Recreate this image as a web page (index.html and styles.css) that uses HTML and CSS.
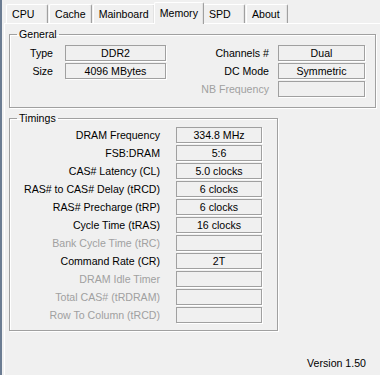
FILE: index.html
```html
<!DOCTYPE html>
<html lang="en">
<head>
    <meta charset="UTF-8">
    <title>CPU-Z Memory</title>
    <link rel="stylesheet" href="styles.css">
</head>
<body>
    <div class="window">
        <div class="tabs">
            <div class="tab">CPU</div>
            <div class="tab">Cache</div>
            <div class="tab">Mainboard</div>
            <div class="tab active">Memory</div>
            <div class="tab">SPD</div>
            <div class="tab">About</div>
        </div>

        <div class="panel">
            <fieldset class="group general">
                <legend>General</legend>
                <div class="grid-general">
                    <span class="lbl lbl-left">Type</span>
                    <span class="val">DDR2</span>
                    <span class="lbl lbl-right">Channels #</span>
                    <span class="val">Dual</span>

                    <span class="lbl lbl-left">Size</span>
                    <span class="val">4096 MBytes</span>
                    <span class="lbl lbl-right">DC Mode</span>
                    <span class="val">Symmetric</span>

                    <span></span>
                    <span></span>
                    <span class="lbl lbl-right off">NB Frequency</span>
                    <span class="val"></span>
                </div>
            </fieldset>

            <fieldset class="group timings">
                <legend>Timings</legend>
                <div class="grid-timings">
                    <span class="lbl">DRAM Frequency</span><span class="val">334.8 MHz</span>
                    <span class="lbl">FSB:DRAM</span><span class="val">5:6</span>
                    <span class="lbl">CAS# Latency (CL)</span><span class="val">5.0 clocks</span>
                    <span class="lbl">RAS# to CAS# Delay (tRCD)</span><span class="val">6 clocks</span>
                    <span class="lbl">RAS# Precharge (tRP)</span><span class="val">6 clocks</span>
                    <span class="lbl">Cycle Time (tRAS)</span><span class="val">16 clocks</span>
                    <span class="lbl off">Bank Cycle Time (tRC)</span><span class="val"></span>
                    <span class="lbl">Command Rate (CR)</span><span class="val">2T</span>
                    <span class="lbl off">DRAM Idle Timer</span><span class="val"></span>
                    <span class="lbl off">Total CAS# (tRDRAM)</span><span class="val"></span>
                    <span class="lbl off">Row To Column (tRCD)</span><span class="val"></span>
                </div>
            </fieldset>

            <div class="version">Version 1.50</div>
        </div>
    </div>
</body>
</html>
```

FILE: styles.css
```css
body{
    margin: 0;
    background-color: #f0f0f0;
    font-family: 'Liberation Sans', Arial, sans-serif;
    font-size: 10.6px;
    color: #000;
    border-left: 2px solid #6b7c92;
    height: 375px;
    box-sizing: border-box;
    overflow: hidden;
}
.window{
    padding-left: 2px;
}
.tabs{
    display: flex;
    align-items: flex-end;
    gap: 1px;
    height: 23px;
    padding-left: 2px;
}
.tab{
    min-width: 30px;
    height: 18px;
    line-height: 18px;
    padding: 0 5px;
    border-top: 1px solid #fff;
    border-left: 1px solid #fff;
    border-right: 1px solid #a0a0a0;
    border-radius: 2px 2px 0 0;
    box-shadow: inset -1px 0 0 #e3e3e3;
}
.tab.active{
    height: 21px;
    line-height: 20px;
    margin: 0 -2px -1px;
    padding: 0 5px;
    position: relative;
    background-color: #f0f0f0;
}
.panel{
    border-top: 1px solid #fff;
    border-left: 1px solid #fff;
    padding: 4px 0 0 4px;
    height: 352px;
}
.group{
    margin: 0;
    padding: 0;
    border: 1px solid #a0a0a0;
    box-shadow: 1px 1px 0 #fff, inset 1px 1px 0 #fff;
}
.group legend{
    margin-left: 7px;
    padding: 0 2px;
    line-height: 13px;
}
.general{
    width: 365px;
    padding: 4px 0 10px;
}
.timings{
    width: 267px;
    margin-top: 4px;
    padding: 2px 0 7px;
}
.grid-general{
    display: grid;
    grid-template-columns: 55px 101px 112px 87px;
    row-gap: 2px;
}
.grid-timings{
    display: grid;
    grid-template-columns: 166px 86px;
    row-gap: 2px;
}
.lbl{
    text-align: right;
    line-height: 16px;
    white-space: nowrap;
}
.grid-timings .lbl{
    padding-right: 16px;
}
.lbl-left{
    padding-right: 12px;
}
.lbl-right{
    padding-right: 9px;
}
.off{
    color: #a0a0a0;
}
.val{
    height: 14px;
    line-height: 14px;
    border: 1px solid #a0a0a0;
    box-shadow: 1px 1px 0 #fff;
    text-align: center;
    white-space: nowrap;
}
.version{
    text-align: right;
    margin-top: 26px;
    padding-right: 14px;
}
```
